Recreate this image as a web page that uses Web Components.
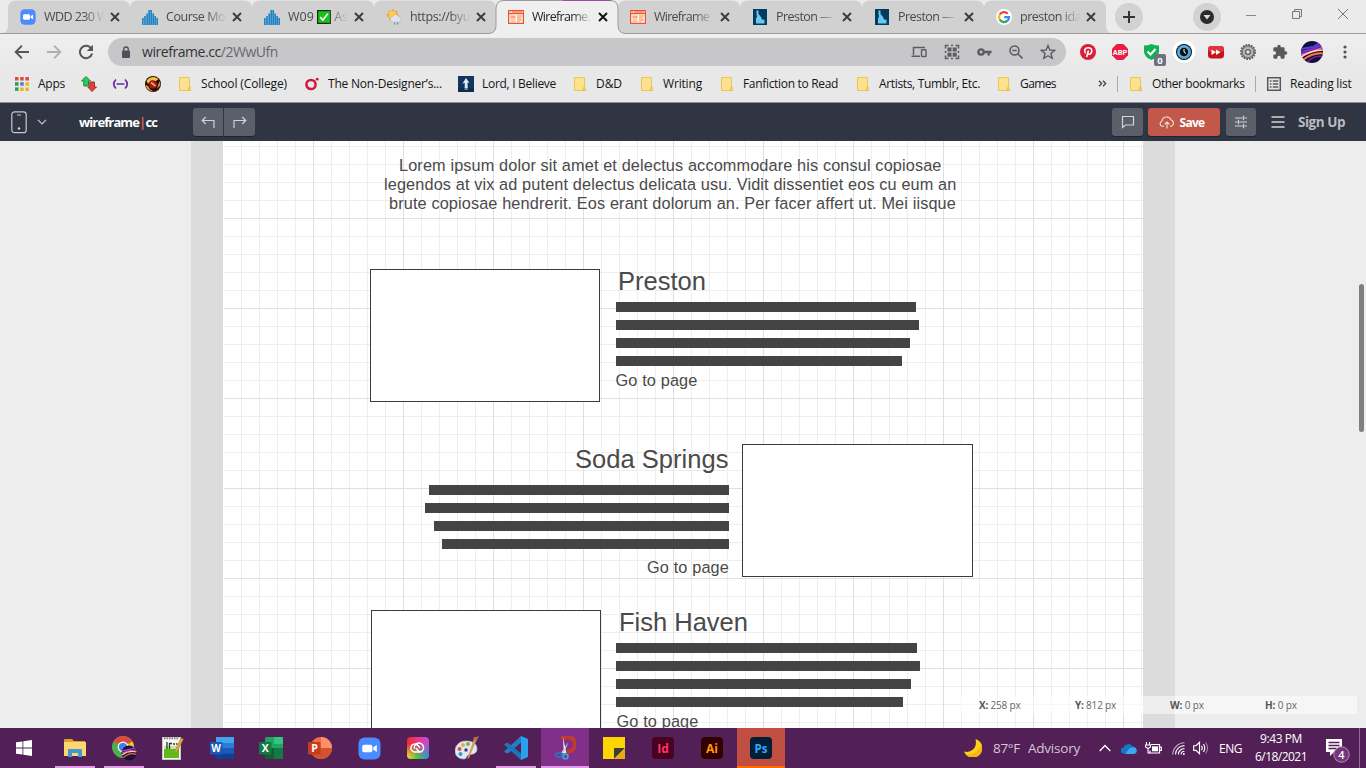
<!DOCTYPE html>
<html lang="en">
<head>
<meta charset="utf-8">
<title>wireframe.cc</title>
<style>
html,body{margin:0;height:100%;overflow:hidden}
body{font-family:"Open Sans","Noto Sans",sans-serif}
</style>
</head>
<body>
<desktop-screen></desktop-screen>
<script>
const PHOTO = `<radialGradient id="pg" cx=".4" cy=".9" r=".9"><stop offset="0" stop-color="#ffb070"/><stop offset=".35" stop-color="#d0508a"/><stop offset=".7" stop-color="#3a2a9a"/><stop offset="1" stop-color="#15104a"/></radialGradient>`;
const ICONS = {
zoom:`<svg viewBox="0 0 24 24"><rect x=".5" y=".5" width="23" height="23" rx="6.5" fill="#4a8cff"/><rect x="4.5" y="8" width="10.5" height="8" rx="2" fill="#fff"/><path d="M16 10.8 19.6 8.4V15.6L16 13.2Z" fill="#fff"/></svg>`,
check:`<svg viewBox="0 0 14 14"><rect x=".6" y=".6" width="12.800" height="12.800" fill="#13c413" stroke="#222" stroke-width="1.200"/><path d="M3.200 7.200 5.800 10 10.800 3.800" fill="none" stroke="#fff" stroke-width="1.700"/></svg>`,
bars:`<svg viewBox="0 0 16 16"><path d="M.8 9v7M3 7v9M5.2 4.5V16M7.2 1v15M9.2 1v15M11.2 4.5V16M13.2 7v9M15.3 9v7" stroke="#1f83c6" stroke-width="1.7"/></svg>`,
weather:`<svg viewBox="0 0 16 16"><path d="M1 5 3 4 2 1.500 5 2 7 0 9 2 11.500 2 11.500 4.500 13 7 8 10 3.500 11.500 3.500 9 1 7.500Z" fill="#f0a02c"/><circle cx="6.500" cy="5.800" r="4" fill="#ffc95a"/><path d="M6 13a2.600 2.600 0 0 1 .5-5 3.300 3.300 0 0 1 6.300 0 2.600 2.600 0 0 1 .5 5Z" fill="#dfe3ea" stroke="#b3b7c4" stroke-width=".6"/><path d="M9 14l-.6 1.500M12 13.500l-.8 2" stroke="#579" stroke-width="1"/></svg>`,
wire:`<svg viewBox="0 0 16 16"><rect x=".6" y="1.600" width="14.800" height="12.800" fill="#fff3ea" stroke="#e8552c" stroke-width="1.200"/><path d="M1 4.600H15" stroke="#e8552c" stroke-width="1.200"/><path d="M2 3h1m1 0h10" stroke="#e8552c" stroke-width="1"/><path d="M2.500 6.500h5v3h-5zM2.500 10.500h5v1h-5zM2.500 12.300h5v.9h-5z" fill="#f3a883"/><path d="M9 6.500h5v1H9zM9 8.500h4v1H9zM9 10.500h5v1H9zM9 12.500h3v.8H9z" fill="#f08a5b"/></svg>`,
idaho:`<svg viewBox="0 0 14 16"><rect width="14" height="16" fill="#063b60"/><path d="M3.500 1.500H5.500V5L8 8 9 10.500 11.500 10.800V14.500H3V9.500L4 7.500 3.500 5Z" fill="#68c8f0"/></svg>`,
google:`<svg viewBox="0 0 16 16"><circle cx="8" cy="8" r="8" fill="#fff"/><g fill="none" stroke-width="2.300"><path d="M11.700 4.700A5 5 0 0 0 3.700 5.500" stroke="#ea4335"/><path d="M3.700 5.500a5 5 0 0 0 0 5" stroke="#fbbc05"/><path d="M3.700 10.500a5 5 0 0 0 7.800 1.200" stroke="#34a853"/><path d="M11.500 11.700A5 5 0 0 0 13 8.200H8.200" stroke="#4285f4"/></g></svg>`,
x:`<svg viewBox="0 0 10 10"><path d="M1 1l8 8m0-8l-8 8" stroke="currentColor" stroke-width="1.900"/></svg>`,
plus:`<svg viewBox="0 0 28 28"><circle cx="14" cy="14" r="14" fill="#d2d2d2"/><path d="M14 8v12M8 14h12" stroke="#333" stroke-width="2"/></svg>`,
drop:`<svg viewBox="0 0 28 28"><circle cx="14" cy="14" r="14" fill="#d2d2d2"/><circle cx="14" cy="14" r="7" fill="#2b2b2b"/><path d="M10.500 12h7L14 16.500Z" fill="#ddd"/></svg>`,
min:`<svg viewBox="0 0 12 12"><path d="M1 6.500h10" stroke="#888"/></svg>`,
restore:`<svg viewBox="0 0 12 12"><path d="M1.500 3.500h7v7h-7zM3.500 3.500v-2h7v7h-2" fill="none" stroke="#777"/></svg>`,
close:`<svg viewBox="0 0 12 12"><path d="M1 1l10 10M11 1 1 11" stroke="#777" stroke-width="1"/></svg>`,
back:`<svg viewBox="0 0 16 16"><path d="M15 8H2M8 1.700 1.700 8 8 14.300" fill="none" stroke="#555659" stroke-width="1.900"/></svg>`,
fwd:`<svg viewBox="0 0 16 16"><path d="M1 8h13M8 1.700 14.300 8 8 14.300" fill="none" stroke="#b0b0b2" stroke-width="1.900"/></svg>`,
reload:`<svg viewBox="0 0 16 16"><path d="M13.400 4.800A6.200 6.200 0 1 0 14.100 9.500" fill="none" stroke="#555659" stroke-width="2"/><path d="M15 .8V7H8.800Z" fill="#555659"/></svg>`,
lock:`<svg viewBox="0 0 10 13"><rect x="1" y="4.500" width="8" height="7.500" rx="1" fill="#505155"/><path d="M2.700 5V3.300a2.300 2.300 0 0 1 4.600 0V5" fill="none" stroke="#505155" stroke-width="1.300"/></svg>`,
device:`<svg viewBox="0 0 16 12"><path d="M14 1.500H2.500v7.500M.5 10.300H9" fill="none" stroke="#5c5d62" stroke-width="1.500"/><rect x="10.500" y="3.700" width="4.500" height="6.800" rx=".6" fill="none" stroke="#5c5d62" stroke-width="1.400"/></svg>`,
qr:`<svg viewBox="0 0 16 16"><g fill="none" stroke="#5c5d62" stroke-width="1.500"><path d="M1.500 4.500v-3h3M11.500 1.500h3v3M14.500 11.500v3h-3M4.500 14.500h-3v-3"/><path d="M7 1.500h2M7 14.500h2M1.500 7v2M14.500 7v2"/></g><g fill="#5c5d62"><rect x="3.500" y="3.500" width="4" height="4"/><rect x="8.700" y="3.500" width="4" height="4"/><rect x="3.500" y="8.700" width="4" height="4"/><rect x="8.700" y="8.700" width="4" height="4"/></g></svg>`,
key:`<svg viewBox="0 0 16 10"><circle cx="4.300" cy="5" r="2.800" fill="none" stroke="#5c5d62" stroke-width="2.600"/><path d="M7 5h8.500M12.500 5v3.700" stroke="#5c5d62" stroke-width="2.600"/></svg>`,
mag:`<svg viewBox="0 0 14 14"><circle cx="5.500" cy="5.500" r="4.500" fill="none" stroke="#5c5d62" stroke-width="1.500"/><path d="M3.300 5.500h4.400M8.700 8.700l4.800 4.800" stroke="#5c5d62" stroke-width="1.600"/></svg>`,
star:`<svg viewBox="0 0 16 16"><path d="M8 1.500 9.900 6l4.800.4L11 9.500l1.200 4.800L8 11.700l-4.200 2.600L5 9.500 1.300 6.400 6.100 6Z" fill="none" stroke="#5c5d62" stroke-width="1.400"/></svg>`,
pin:`<svg viewBox="0 0 16 16"><circle cx="8" cy="8" r="8" fill="#d81e3a"/><path d="M5.600 9.200C3.500 6.500 5 3.700 8.200 3.700c2.600 0 3.800 1.600 3.600 3.500-.2 2.400-2.300 3.800-3.900 2.600M8.500 6.500 6.600 13" fill="none" stroke="#fff" stroke-width="1.600"/></svg>`,
abp:`<svg viewBox="0 0 16 16"><path d="M4.700 0h6.600L16 4.700v6.600L11.300 16H4.700L0 11.300V4.700Z" fill="#e91e46"/><text x="8" y="11" font-family="Roboto,sans-serif" font-weight="700" font-size="8" textLength="14.500" lengthAdjust="spacingAndGlyphs" text-anchor="middle" fill="#fff">ABP</text></svg>`,
shield:`<svg viewBox="0 0 22 22"><path d="M0 1.500Q4 1.500 7.500 0 11 1.500 15 1.500V8Q14.500 13 7.500 16 .5 13 0 8Z" fill="#10b251"/><path d="M3.500 7.500 6.500 10.500 11.500 5" fill="none" stroke="#fff" stroke-width="2"/><rect x="10" y="10" width="12" height="12" rx="2" fill="#6f7080"/><text x="16" y="19.500" font-family="Open Sans,sans-serif" font-weight="700" font-size="9.500" text-anchor="middle" fill="#fff">0</text></svg>`,
clock:`<svg viewBox="0 0 24 24"><circle cx="12" cy="12.700" r="11.300" fill="#c4c4c4"/><circle cx="12" cy="12" r="11.500" fill="#fff"/><circle cx="12" cy="12" r="8" fill="#111"/><circle cx="12" cy="12" r="5.600" fill="none" stroke="#4eaee0" stroke-width="2.800"/><path d="M12 9V12l2 1.500" stroke="#fff" fill="none"/></svg>`,
ff:`<svg viewBox="0 0 16 14"><rect y="1" width="16" height="12.500" rx="3.500" fill="#c4131e"/><rect y="1" width="16" height="6" rx="3" fill="#e2333b"/><path d="M3.500 4.500 8 7.300 3.500 10ZM8 4.500 12.500 7.300 8 10Z" fill="#fff"/></svg>`,
gear:`<svg viewBox="0 0 16 16"><circle cx="8" cy="8" r="7" fill="#999" stroke="#5e5e5e" stroke-width="2" stroke-dasharray="1.700 1.050"/><circle cx="8" cy="8" r="5.700" fill="#b6b6b6" stroke="#777"/><circle cx="8" cy="8" r="2.400" fill="#e8e8e8" stroke="#5e5e5e" stroke-width="1.400"/></svg>`,
puzzle:`<svg viewBox="0 0 24 24"><path d="M20.500 11H19V7a2 2 0 0 0-2-2h-4V3.500a2.500 2.500 0 0 0-5 0V5H4a2 2 0 0 0-2 2v3.800h1.500a2.700 2.700 0 0 1 0 5.400H2V20a2 2 0 0 0 2 2h3.800v-1.500a2.700 2.700 0 0 1 5.400 0V22H17a2 2 0 0 0 2-2v-4h1.500a2.500 2.500 0 0 0 0-5Z" fill="#57585c"/></svg>`,
photo:`<svg viewBox="0 0 22 22"><defs><clipPath id="c"><circle cx="11" cy="11" r="11"/></clipPath></defs><g clip-path="url(#c)"><rect width="22" height="22" fill="#170d3c"/><path d="M0 8 12 6 22 0" stroke="#3a4fd8" stroke-width="2" fill="none"/><path d="M0 11 12 8 23 3" stroke="#8a2fc8" stroke-width="2" fill="none"/><path d="M-1 14 12 10 23 6" stroke="#ea5cc8" stroke-width="1.800" fill="none"/><path d="M0 16Q12 8.500 23 9" stroke="#ffe0bc" stroke-width="1.600" fill="none"/><path d="M2 19Q12 11 23 12.500" stroke="#ff7a30" stroke-width="2" fill="none"/><path d="M5 22Q14 13 23 16" stroke="#7a2190" stroke-width="1.700" fill="none"/></g></svg>`,
dots:`<svg viewBox="0 0 4 14"><g fill="#505155"><circle cx="2" cy="2" r="1.600"/><circle cx="2" cy="7" r="1.600"/><circle cx="2" cy="12" r="1.600"/></g></svg>`,
apps:`<svg viewBox="0 0 16 16"><g transform="translate(1 1)"><path d="M0 0h3.500v3.500H0zM5.200 0h3.500v3.500H5.200zM10.400 0h3.500v3.500h-3.500z" fill="#dd4a3c"/><path d="M0 5.200h3.500v3.500H0z" fill="#2f9c54"/><path d="M5.200 5.200h3.500v3.500H5.200z" fill="#3f80e6"/><path d="M10.400 5.200h3.500v3.500h-3.500zM10.400 10.400h3.500v3.500h-3.500zM5.200 10.400h3.500v3.500H5.200z" fill="#efb320"/><path d="M0 10.400h3.500v3.500H0z" fill="#2f9c54"/></g></svg>`,
updown:`<svg viewBox="0 0 16 16"><path d="M5 .5 9.500 5H7.500V10H2.800V5H.5Z" fill="#31c95b" stroke="#178a38"/><path d="M11 15.500 6.800 11H8.800V6h4.600v5h2.100Z" fill="#e5403a" stroke="#a82a28"/></svg>`,
paren:`<svg viewBox="0 0 17 12"><path d="M4 1.500Q-.5 6 4 10.500M13 1.500Q17.500 6 13 10.500M4.500 6h8" fill="none" stroke="#6a2aa2" stroke-width="1.700"/></svg>`,
ball:`<svg viewBox="0 0 16 16"><circle cx="8" cy="8" r="8" fill="#2b0a06"/><path d="M1.500 4.500Q7-1.500 13.500 3L11 5 6 4.500 3 8Z" fill="#f2c23c"/><path d="M.5 9 3 10 5 13.500 9 15.500Q2 15.500 .5 9Z" fill="#e8a42b"/><path d="M12 13 15.500 9 14.500 5 13 9Z" fill="#d8922b"/><circle cx="8" cy="8.500" r="3.900" fill="#a51a16"/><path d="M6 6.500l4.500 3.500" stroke="#f0a08c" stroke-width="1.600"/></svg>`,
folder:`<svg viewBox="0 0 16 16"><path d="M2.500 1.500H12.500V10.500L13.500 12V14.500H2.500Z" fill="#fde28e" stroke="#e9c656"/><path d="M12.500 10l-1.300 3v1.500h2.300" fill="#f6d269" stroke="#e5bb3d" stroke-width=".8"/></svg>`,
ring:`<svg viewBox="0 0 16 16"><circle cx="7" cy="8.500" r="4.600" fill="none" stroke="#d5173d" stroke-width="2.500"/><circle cx="13.200" cy="3.200" r="1.400" fill="#d5173d"/></svg>`,
lord:`<svg viewBox="0 0 16 16"><rect width="16" height="16" fill="#12365c"/><path d="M8 2 11.500 7 9.500 6.500 9.800 14H6.600L6.800 7 4.500 7.500Z" fill="#dfe9f1"/><path d="M0 12h16v4H0z" fill="#0b2442" opacity=".5"/></svg>`,
list:`<svg viewBox="0 0 16 16"><path d="M1.700 1.700h12.600v12.600H1.700z" fill="none" stroke="#57585c" stroke-width="1.500"/><path d="M3.800 5H5.500M3.800 8H5.500M3.800 11H5.500M6.800 5h5.500M6.800 8h5.500M6.800 11h5.500" stroke="#57585c" stroke-width="1.400"/></svg>`,
more:`<svg viewBox="0 0 9 7"><path d="M1 .7 3.700 3.500 1 6.300M5 .7 7.700 3.500 5 6.300" fill="none" stroke="#444" stroke-width="1.300"/></svg>`,
phone:`<svg viewBox="0 0 16 23"><rect x=".8" y=".8" width="14.400" height="20.900" rx="2.800" fill="none" stroke="#c5c8cc" stroke-width="1.200"/><path d="M6 4h4" stroke="#c5c8cc"/><circle cx="8" cy="17.500" r="1.200" fill="#d8dadd"/></svg>`,
chev:`<svg viewBox="0 0 10 6"><path d="M1 .8 5 4.800 9 .8" fill="none" stroke="#c5c8cc" stroke-width="1.200"/></svg>`,
undo:`<svg viewBox="0 0 14 13"><path d="M13 12V4.500H1.200M4.800 1 1.200 4.500 4.800 8" fill="none" stroke="#d3d5d8" stroke-width="1.150"/></svg>`,
redo:`<svg viewBox="0 0 14 13"><path d="M1 12V4.500H12.800M9.200 1 12.800 4.500 9.200 8" fill="none" stroke="#d3d5d8" stroke-width="1.150"/></svg>`,
chat:`<svg viewBox="0 0 14 14"><path d="M1.500 1.500h11v8.500H4.500L1.500 12.500Z" fill="none" stroke="#d3d5d8" stroke-width="1.200"/></svg>`,
cloud:`<svg viewBox="0 0 16 13"><path d="M5 10.300H3.300A2.800 2.800 0 0 1 3 4.900 4.700 4.700 0 0 1 11.900 3.700 3.500 3.500 0 0 1 12.300 10.300H11M8 12.500V6.200M5.600 8.400 8 6l2.400 2.400" fill="none" stroke="#fbe4df" stroke-width="1.100"/></svg>`,
tune:`<svg viewBox="0 0 14 14"><path d="M1 3h7.500M10.500 3H13M1 7h2.500M5.500 7H13M1 11h7.500M10.500 11H13M9.500 .8v4.400M4.500 4.800v4.400M9.500 8.800v4.400" stroke="#d3d5d8" stroke-width="1.200"/></svg>`,
menu:`<svg viewBox="0 0 14 12"><path d="M.5 1h13M.5 6h13M.5 11h13" stroke="#d3d5d8" stroke-width="1.400"/></svg>`,
win:`<svg viewBox="0 0 16 16"><path d="M0 2.300 6.500 1.400V7.600H0ZM7.300 1.300 16 0V7.600H7.300ZM0 8.400H6.500V14.600L0 13.700ZM7.300 8.400H16V16L7.300 14.700Z" fill="#fff"/></svg>`,
files:`<svg viewBox="0 0 22 18"><path d="M0 1Q0 0 1 0H8L10 2H21V16H0Z" fill="#dba233"/><path d="M0 3H22V17H0Z" fill="#fcd670"/><path d="M4 18V11Q4 10 5 10H17Q18 10 18 11V18H14V14H8V18Z" fill="#3f9ad4"/></svg>`,
chrome:`<svg viewBox="0 0 26 26"><defs>${PHOTO}</defs><circle cx="12" cy="12" r="11" fill="#4caf50"/><path d="M12 12 2.500 6.500A11 11 0 0 1 21.500 6.500Z" fill="#dd4b3e"/><path d="M12 12 21.500 6.500A11 11 0 0 1 12 23Z" fill="#f6c52e"/><circle cx="12" cy="12" r="5.400" fill="#fff"/><circle cx="12" cy="12" r="4.200" fill="#3f7fe8"/><circle cx="18" cy="18" r="7.500" fill="#1b1040"/><path d="M11 16 24 13M11 18Q18 15 25 15" stroke="#c04fd8" stroke-width="1.200" fill="none"/><path d="M11 20Q18 15 25.500 17" stroke="#ffc8a0" stroke-width="1.200" fill="none"/><path d="M12.500 22.500Q19 17 25 19.500" stroke="#f06830" stroke-width="1.300" fill="none"/></svg>`,
npp:`<svg viewBox="0 0 22 24"><rect x=".5" y="1.500" width="18" height="22" fill="#f5f8ee" stroke="#c8c8c8"/><path d="M2 13H17V22H2Z" fill="#5fbb1c"/><path d="M2 10h15v3H2z" fill="#c4e6a0"/><path d="M2 2.500h15" stroke="#777" stroke-width="1.500" stroke-dasharray="1.500 1"/><path d="M5 6v7M7.500 13V7.500h2.500M11 8h2M14 8h1.500" stroke="#333" fill="none" stroke-width="1.300"/><path d="M21.500 3 15 16 12.500 17.500 13 14.500 19 2Z" fill="#e0a93c" stroke="#936a1b" stroke-width=".5"/></svg>`,
word:`<svg viewBox="0 0 24 22"><rect x="6" width="18" height="22" rx="1.500" fill="#2b7cd3"/><path d="M6 0H24V6H6Z" fill="#41a5ee"/><path d="M6 11H24V16.500H6Z" fill="#185abd"/><path d="M6 16.500H24V22H6Z" fill="#103f91"/><rect y="5" width="12.500" height="12.500" rx="1" fill="#185abd"/><text x="6.200" y="15" font-family="Open Sans,sans-serif" font-weight="700" font-size="10" text-anchor="middle" fill="#fff">W</text></svg>`,
excel:`<svg viewBox="0 0 24 22"><rect x="6" width="18" height="22" rx="1.500" fill="#21a366"/><path d="M15 0h9v7h-9z" fill="#33c481"/><path d="M6 11h9v11H6z" fill="#185c37"/><path d="M15 11h9v11h-9z" fill="#107c41"/><rect y="5" width="12.500" height="12.500" rx="1" fill="#107c41"/><text x="6.200" y="15" font-family="Open Sans,sans-serif" font-weight="700" font-size="10.500" text-anchor="middle" fill="#fff">X</text></svg>`,
ppt:`<svg viewBox="0 0 24 22"><circle cx="13" cy="11" r="11" fill="#ed6c47"/><path d="M13 0A11 11 0 0 1 24 11H13Z" fill="#ff8f6b"/><path d="M2 11H24A11 11 0 0 1 2 11" fill="#d35230"/><rect y="5" width="12.500" height="12.500" rx="1" fill="#c43e1c"/><text x="6.500" y="15" font-family="Open Sans,sans-serif" font-weight="700" font-size="10.500" text-anchor="middle" fill="#fff">P</text></svg>`,
cc:`<svg viewBox="0 0 22 22"><defs><linearGradient id="g" x1="0" y1="0" x2="1" y2="0"><stop offset="0" stop-color="#ee2a24"/><stop offset=".5" stop-color="#ef3a8c"/><stop offset="1" stop-color="#b84cdb"/></linearGradient><linearGradient id="h" x1="0" y1="0" x2="1" y2="0"><stop offset="0" stop-color="#f6e02a"/><stop offset=".45" stop-color="#4fc840"/><stop offset="1" stop-color="#2a8cf0"/></linearGradient><linearGradient id="m" x1="0" y1="0" x2="0" y2="1"><stop offset=".3" stop-color="#000"/><stop offset=".9" stop-color="#fff"/></linearGradient><mask id="k"><rect width="22" height="22" fill="url(#m)"/></mask></defs><rect width="22" height="22" rx="4" fill="url(#g)"/><rect width="22" height="22" rx="4" fill="url(#h)" mask="url(#k)"/><g fill="none" stroke="#fff" stroke-width="1.500"><path d="M13.500 15H8A4 4 0 1 1 10.500 8L13 10.800M7.500 11.800a4.600 4.600 0 1 1 6 3.200Q12.500 15 11.500 14L9 11.300"/></g></svg>`,
paint:`<svg viewBox="0 0 24 24"><path d="M11 5C4 5 0 10 0 15s4 8 9 8c3 0 2-3 4-4s9 0 9-6-5-8-11-8Z" fill="#dfe8f0" stroke="#a8bccb" stroke-width=".7"/><circle cx="4.500" cy="13" r="2" fill="#df4f43"/><circle cx="8" cy="9" r="2" fill="#e5ae3c"/><circle cx="13" cy="8" r="2" fill="#77b843"/><circle cx="5.500" cy="18" r="2" fill="#3597d3"/><circle cx="11" cy="14" r="1.700" fill="#2c3d75"/><path d="M22 3 14 22 12.500 23 13 20 19 3Z" fill="#d99a56"/><path d="M18.500 4Q18 1 20 1T24 0L21.500 5Z" fill="#a9744b"/></svg>`,
code:`<svg viewBox="0 0 24 24"><path d="M17 0V6.500L4 17.500 2 17 0 15.500 17 0Z" fill="#1f80c4"/><path d="M0 8.500 2 7 4 6.800 17 17.500V24L0 8.500Z" fill="#1b75b8"/><path d="M17 0 24 3V21L17 24Z" fill="#2ba0ee"/></svg>`,
snip:`<svg viewBox="0 0 22 24"><path d="M7.500 3A8 7.500 0 1 1 13 15.800" fill="none" stroke="#c23a2c" stroke-width="4"/><path d="M9 1 12.300 17 9.800 17Z" fill="#f3f5f8"/><path d="M14.500 6 7 17 9.500 18Z" fill="#c8d2de"/><ellipse cx="5" cy="19" rx="3.400" ry="2" fill="none" stroke="#2f6fb8" stroke-width="1.800"/><circle cx="11.500" cy="20.500" r="2.400" fill="none" stroke="#3f9fe0" stroke-width="1.800"/></svg>`,
sticky:`<svg viewBox="0 0 22 22"><path d="M0 0H22V22H0Z" fill="#fbd600"/><path d="M11 22V11H22Z" fill="#3c3c3c"/><path d="M11 22 22 11V22Z" fill="#e8ac12"/></svg>`,
id:`<svg viewBox="0 0 22 22"><rect width="22" height="22" rx="4" fill="#49021f"/><text x="11" y="15.500" font-family="Open Sans,sans-serif" font-weight="700" font-size="12" text-anchor="middle" fill="#ff3366">Id</text></svg>`,
ai:`<svg viewBox="0 0 22 22"><rect width="22" height="22" rx="4" fill="#330000"/><text x="11" y="15.500" font-family="Open Sans,sans-serif" font-weight="700" font-size="12" text-anchor="middle" fill="#ff9a00">Ai</text></svg>`,
ps:`<svg viewBox="0 0 22 22"><rect width="22" height="22" rx="4" fill="#001e36"/><text x="11" y="15.500" font-family="Open Sans,sans-serif" font-weight="700" font-size="11.500" text-anchor="middle" fill="#31a8ff">Ps</text></svg>`,
moon:`<svg viewBox="0 0 18 18"><path d="M11.500 0A9.500 9.500 0 1 1 0 12.500Q5 14 9 10.500T11.500 0Z" fill="#fcd116"/><path d="M18 8A9 9 0 0 1 2 15Q8 17 13 12T17 4Z" fill="#f4aa18" opacity=".7"/></svg>`,
up:`<svg viewBox="0 0 12 8"><path d="M.7 7 6 1.500 11.300 7" fill="none" stroke="#fff" stroke-width="1.300"/></svg>`,
drive:`<svg viewBox="0 0 16 11"><path d="M3 10.500A3 3 0 0 1 2.500 4.500 5 5 0 0 1 11.500 3.500 3.600 3.600 0 0 1 13 10.500Z" fill="#1678c8"/><path d="M4 11 8 6Q10 3.500 13 4.500A3.300 3.300 0 0 1 13 11Z" fill="#3ba9ee"/></svg>`,
batt:`<svg viewBox="0 0 17 12"><path d="M6 2.500H14.500V11H5V8.500M15 5h1.300v3.500H15" fill="none" stroke="#fff" stroke-width="1.200"/><path d="M7 4.300h6v5H7z" fill="#fff"/><path d="M1.500 0v3M4.500 0v3M.5 3h5v2L3 6.500.5 5ZM3 6v5h2" fill="none" stroke="#fff" stroke-width="1.100"/></svg>`,
wifi:`<svg viewBox="0 0 13 13"><g fill="none" stroke="#fff" stroke-width="1.100"><path d="M.7 12.500A12 12 0 0 1 12.500 .8" opacity=".65"/><path d="M3.500 12.500A9 9 0 0 1 12.500 3.600M6.300 12.500a6.200 6.200 0 0 1 6.200-6"/><path d="M9 12.500a3.500 3.500 0 0 1 3.500-3.300"/></g><circle cx="11.800" cy="12" r="1" fill="#fff"/></svg>`,
vol:`<svg viewBox="0 0 16 14"><path d="M.7 4.700H3L6.500 1.300V12.700L3 9.300H.7ZM8.500 4.700Q10 7 8.500 9.300M10.500 3Q13 7 10.500 11" fill="none" stroke="#fff" stroke-width="1.150"/><path d="M12.700 1.500Q16.500 7 12.700 12.500" fill="none" stroke="#fff" opacity=".5"/></svg>`,
note:`<svg viewBox="0 0 26 25"><path d="M0 0H16V13H8L4 17V13H0Z" fill="#fff"/><path d="M2.500 3.500h11M2.500 6.500h11M2.500 9.500h8" stroke="#521f56" stroke-width="1.300"/><circle cx="15.500" cy="15.500" r="7.700" fill="#75357b" stroke="#b68fb9"/><text x="15.500" y="19.500" font-family="Open Sans,sans-serif" font-weight="600" font-size="11" text-anchor="middle" fill="#fff">4</text></svg>`
};

class Base extends HTMLElement{
  constructor(){super();this.attachShadow({mode:'open'})}
  connectedCallback(){this.shadowRoot.innerHTML=this.render()}
}
const def=(n,c)=>customElements.define(n,c);

/* Inline icon: name, width and height */
def('ui-icon',class extends Base{render(){
  return `<style>:host{display:block;flex:none;width:${this.getAttribute('w')||16}px;height:${this.getAttribute('h')||this.getAttribute('w')||16}px}svg{display:block;width:100%;height:100%}</style>${ICONS[this.getAttribute('name')]}`}});

/* One line of text whose tracking is set to reach the width given in "w" */
def('ui-label',class extends HTMLElement{
  constructor(){super();this.attachShadow({mode:'open'}).innerHTML=`<style>:host{display:block;flex:none;white-space:pre}span{display:inline-block}</style><span><slot></slot></span>`}
  connectedCallback(){
    const w=+this.getAttribute('w'); if(!w) return;
    const n=this.textContent.length, nat=this.shadowRoot.querySelector('span').getBoundingClientRect().width;
    this.style.letterSpacing=((w-nat)/n).toFixed(3)+'px';
  }});

/* A left-to-right strip: each item spans from its start to the next one's */
const spans=(items,end)=>items.map((it,i)=>({...it,w:(i+1<items.length?items[i+1].x:end)-it.x}));

def('browser-tab',class extends Base{render(){
  const on=this.hasAttribute('active'),sep=this.hasAttribute('sep');
  const text=this.getAttribute('label').replace('✅','<span class="e">✅<ui-icon name="check" w="14"></ui-icon></span>');
  return `<style>
  :host{display:flex;width:122px;height:34px;position:relative;align-items:center;box-sizing:border-box;padding-left:12px;flex:none;font-size:12.500px;color:${on?'#222':'#494949'};z-index:${on?2:0}}
  .s{position:absolute;left:-8px;top:0;width:138px;height:34px;z-index:-1}
  .t{margin-left:8px;width:66px;overflow:hidden;height:20px;line-height:20px;-webkit-mask:linear-gradient(90deg,#000 60%,transparent 92%);mask:linear-gradient(90deg,#000 60%,transparent 92%)}
  .x{margin-left:0;color:${on?'#111':'#3c3c3c'}}
  .e{display:inline-block;width:14px;position:relative;color:transparent;letter-spacing:0;font-size:10px}.e ui-icon{position:absolute;left:0;top:3px}
  .v{position:absolute;right:-1px;top:7px;width:1px;height:20px;background:#777}
  </style><svg class="s" viewBox="0 0 138 34"><path d="M0 33.500Q8 33.500 8 25.500V8.500Q8 .5 16 .5H122Q130 .5 130 8.500V25.500Q130 33.500 138 33.500V34H0Z" fill="${on?'#efefef':'#d1d1d1'}"/>
  ${on?'<path d="M0 33.500Q8 33.500 8 25.500V8.500Q8 .5 16 .5H122Q130 .5 130 8.500V25.500Q130 33.500 138 33.500" fill="none" stroke="#999"/>':'<path d="M0 33.500H138" stroke="#9a9a9a"/>'}</svg>
  <ui-icon name="${this.getAttribute('icon')}"></ui-icon><div class="t"><ui-label w="${this.getAttribute('w')}">${text}</ui-label></div><ui-icon class="x" name="x" w="10"></ui-icon>${sep?'<i class="v"></i>':''}`}});

def('tab-strip',class extends Base{render(){
  const T=[['zoom','WDD 230 W',64,1],['bars','Course Mo',59,1],['bars','W09 ✅ As',60,1],['weather','https://byu',60,0],['wire','Wireframe.',58,0],['wire','Wireframe',55,0],['idaho','Preston —',56,1],['idaho','Preston —',56,1],['google','preston ida',61,0]];
  return `<style>:host{display:flex;height:34px;background:#ebebeb;padding-left:8px;box-shadow:inset 0 -1px #9a9a9a;position:relative;align-items:flex-start;isolation:isolate}
  .p{margin:3px 0 0 9px}.d{margin:3px 0 0 50px}.c1{margin:9px 0 0 24px}.c2{margin:8px 0 0 34px}.c3{margin:8px 0 0 34px}
  .line{position:absolute;left:563px;top:0;width:48px;height:1px;background:#a04ba8;z-index:3}
  </style>${T.map((t,i)=>`<browser-tab icon="${t[0]}" label="${t[1]}" w="${t[2]}" ${i==4?'active':''} ${t[3]?'sep':''}></browser-tab>`).join('')}
  <ui-icon class="p" name="plus" w="28"></ui-icon><ui-icon class="d" name="drop" w="28"></ui-icon><ui-icon class="c1" name="min" w="12"></ui-icon><ui-icon class="c2" name="restore" w="12"></ui-icon><ui-icon class="c3" name="close" w="12"></ui-icon><div class="line"></div>`}});

def('tool-bar',class extends Base{render(){
  const om=[['device',911,16,12],['qr',944,16,16],['key',977,15,10],['mag',1009,14,14],['star',1040,16,16]];
  const ex=[['pin',1080,16,16],['abp',1112,16,16],['shield',1144,22,22],['clock',1172,24,24],['ff',1208,16,14],['gear',1240,16,16],['puzzle',1272,16,16],['photo',1301,22,22],['dots',1343,4,14]];
  const row=(a,s)=>{let p=s;return a.map(([n,x,w,h])=>{const m=x-p;p=x+w;return `<ui-icon name="${n}" w="${w}" h="${h}" style="margin-left:${m}px${n=='shield'?';margin-top:6px':''}"></ui-icon>`}).join('')};
  return `<style>:host{display:flex;height:36px;background:linear-gradient(#efefef,#e8e8e8);align-items:center}
  .o{margin-left:14px;width:958px;height:28px;border-radius:14px;background:#c7c7c9;display:flex;align-items:center;font-size:14px;color:#333;box-sizing:border-box}
  .o ui-label{width:137px;line-height:26px}em{font-style:normal;color:#66676b}
  </style>${row([['back',14,16,16],['fwd',46,16,16],['reload',78,16,16]],0)}
  <div class="o"><ui-icon name="lock" w="10" h="13" style="margin-left:13px"></ui-icon><ui-label w="136" style="margin-left:11px">wireframe.cc<em>/2WwUfn</em></ui-label>${row(om,279)}</div>${row(ex,1066)}`}});

def('bookmark-bar',class extends Base{render(){
  const B=spans([{x:14,i:'apps',t:'Apps',l:27},{x:81,i:'updown'},{x:112,i:'paren',iw:17,ih:12},{x:145,i:'ball'},{x:177,i:'folder',t:'School (College)',l:86},{x:304,i:'ring',t:'The Non-Designer’s...',l:114},{x:458,i:'lord',t:'Lord, I Believe',l:74},{x:572,i:'folder',t:'D&amp;D',l:26},{x:639,i:'folder',t:'Writing',l:39},{x:719,i:'folder',t:'Fanfiction to Read',l:95},{x:855,i:'folder',t:'Artists, Tumblr, Etc.',l:101},{x:996,i:'folder',t:'Games',l:36},{x:1098,i:'more',iw:9,ih:7},{x:1117,s:1},{x:1128,i:'folder',t:'Other bookmarks',l:92.500},{x:1255,s:1},{x:1266,i:'list',t:'Reading list',l:61.500}],1366);
  return `<style>:host{display:flex;height:32px;padding-left:14px;background:#e8e8e8;align-items:center;border-bottom:1px solid #8f9094;font-size:12px;color:#151515}
  div{display:flex;align-items:center;gap:8px;flex:none;height:27px;margin-bottom:5px}i{width:1px;height:16px;background:#aaa}ui-label{line-height:18px}</style>
  ${B.map(b=>`<div style="width:${b.w}px">${b.s?'<i></i>':''}${b.i?`<ui-icon name="${b.i}" w="${b.iw||16}" h="${b.ih||16}"></ui-icon>`:''}${b.t?`<ui-label w="${b.l}">${b.t}</ui-label>`:''}</div>`).join('')}`}});

def('app-header',class extends Base{render(){
  return `<style>:host{display:flex;height:38px;background:#2f3542;align-items:center;color:#fff}
  .b{height:28px;background:#5b5f69;display:flex;align-items:center;justify-content:center;box-shadow:0 1px #20242d}
  .logo{font-weight:700;font-size:13px;width:78px;line-height:18px}.logo b{color:#d0604f;font-weight:700}
  .l{width:30px;margin-left:36px;border-radius:3px 0 0 3px}.r{width:31px;margin-left:1px;border-radius:0 3px 3px 0}
  .c{width:31px;margin-left:857px;border-radius:3px}.save{width:72px;margin-left:5px;background:#c25849;border-radius:3px;gap:5px;font-weight:700;font-size:12px;box-sizing:border-box;padding-right:5px}
  .t{width:30px;margin-left:6px;border-radius:3px}.su{font-weight:700;font-size:13.500px;color:#b9bcc1;margin-left:13px}</style>
  <ui-icon name="phone" w="16" h="23" style="margin-left:11px"></ui-icon><ui-icon name="chev" w="10" h="6" style="margin-left:10px"></ui-icon>
  <ui-label class="logo" w="78" style="margin-left:32px">wireframe<b>|</b>cc</ui-label>
  <div class="b l"><ui-icon name="undo" w="14" h="13"></ui-icon></div><div class="b r"><ui-icon name="redo" w="14" h="13"></ui-icon></div>
  <div class="b c"><ui-icon name="chat" w="14"></ui-icon></div><div class="b save"><ui-icon name="cloud" w="16" h="13"></ui-icon><ui-label w="25">Save</ui-label></div><div class="b t"><ui-icon name="tune" w="14"></ui-icon></div>
  <ui-icon name="menu" w="14" h="12" style="margin-left:15px"></ui-icon><ui-label class="su" w="47">Sign Up</ui-label>`}});

/* Free canvas: picture frames, headings, text bars and links on a grid */
def('wire-canvas',class extends Base{render(){
  const box=(x,y,w,h)=>`<div class="box" style="left:${x}px;top:${y}px;width:${w}px;height:${h}px"></div>`;
  const bars=(a,y)=>a.map(([l,r],i)=>`<div class="bar" style="left:${l}px;top:${y+18*i}px;width:${r-l}px"></div>`).join('');
  const t=(x,y,w,s,c='')=>`<ui-label class="${c}" w="${w}" style="left:${x}px;top:${y-1}px">${s}</ui-label>`;
  return `<style>:host{display:block;position:relative;width:920px;height:587px;overflow:hidden;font-family:"Liberation Sans",Arial,sans-serif;color:#4a4a4a;font-size:16.300px;line-height:19px}
  .g{position:absolute;inset:0;background-image:linear-gradient(90deg,#fff 1px,transparent 1px),linear-gradient(90deg,#dfdfdf 1px,transparent 1px),linear-gradient(#dfdfdf 1px,transparent 1px),linear-gradient(90deg,#eee 1px,transparent 1px),linear-gradient(#eee 1px,transparent 1px);background-size:920px 100%,90px 90px,90px 90px,18px 18px,18px 18px;background-position:0 0,0 0,0 77px,0 0,0 5px;background-color:#fff}
  .in{position:absolute;left:-223px;top:-141px;width:1366px;height:768px}
  .in>*{position:absolute;box-sizing:border-box}.box{background:#fff;border:1px solid #3c3c3c}.bar{height:10px;background:#444}.h{font-size:25.500px;line-height:30px}</style>
  <div class="g"></div><div class="in">
  ${t(399,157,542.5,'Lorem ipsum dolor sit amet et delectus accommodare his consul copiosae')}${t(384,176,572.5,'legendos at vix ad putent delectus delicata usu. Vidit dissentiet eos cu eum an')}${t(389,195,567,'brute copiosae hendrerit. Eos erant dolorum an. Per facer affert ut. Mei iisque')}
  ${box(370,269,230,133)}${t(618,267,88,'Preston','h')}${bars([[616,916],[616,919],[616,910],[616,902]],302)}${t(615.5,372,82,'Go to page')}
  ${box(742,444,231,133)}${t(575,445,153.5,'Soda Springs','h')}${bars([[429,729],[425,729],[434,729],[442,729]],485)}${t(647,559,82,'Go to page')}
  ${box(371,610,230,133)}${t(619,608,129,'Fish Haven','h')}${bars([[616,917],[616,920],[616,911],[616,903]],643)}${t(616.5,713,82,'Go to page')}
  </div>`}});

def('work-area',class extends Base{render(){
  return `<style>:host{display:flex;justify-content:flex-start;height:587px;background:#ededed;position:relative;padding-left:191px;box-sizing:border-box}
  .f{display:flex;padding:0 32px;background:#dcdcdc}
  .s{position:absolute;left:1359px;top:143px;width:5px;height:148px;border-radius:3px;background:#7e7f83}
  .st{position:absolute;left:961px;top:555px;width:396px;height:18px;background:rgba(255,255,255,.5);display:grid;grid-template-columns:96px 95px 95px 1fr;padding-left:18px;box-sizing:border-box;font-size:10px;line-height:19px;color:#666}b{color:#555}</style>
  <div class="f"><wire-canvas></wire-canvas></div><div class="s"></div>
  <div class="st"><ui-label w="41.500"><b>X:</b> 258 px</ui-label><ui-label w="41"><b>Y:</b> 812 px</ui-label><ui-label w="34"><b>W:</b> 0 px</ui-label><ui-label w="32"><b>H:</b> 0 px</ui-label></div>`}});

def('task-bar',class extends Base{render(){
  const A=[['win',16,16],['files',22,18,'u'],['chrome',26,26,'u'],['npp',22,24],['word',24,22],['excel',24,22],['ppt',24,22],['zoom',23,23],['cc',22,22],['paint',24,24],['code',24,24,'u'],['snip',22,24,'on'],['sticky',22,22],['id',22,22],['ai',22,22],['ps',22,22,'ps']];
  return `<style>:host{display:flex;height:40px;background:#521f56;color:#fff;align-items:center;position:relative}
  .a{display:grid;grid-template-columns:47px repeat(15,48px);gap:1px;margin-left:1px;padding-left:1px;height:40px}.a div{display:flex;align-items:center;justify-content:center;height:40px;box-sizing:border-box}
  .a div:first-child{padding-right:3px}.a div:nth-child(n+2){margin-left:1px;margin-right:-1px}
  .u{background:linear-gradient(#e29be8,#e29be8) 50% 100%/40px 2px no-repeat}.on{background:#81308a;border-bottom:2px solid #e29be8;padding-top:2px}.ps{background:#c04f42;border-bottom:2px solid #ff6d00;padding-top:2px}
  .w{font-size:13.500px;color:#d5c7d6;line-height:20px}.ck{width:56px;display:flex;flex-direction:column;align-items:center;font-size:12px;line-height:18px;margin-left:11px}
  .e{width:1px;height:40px;background:#8f6d92;margin-left:7px}</style>
  <div class="a">${A.map(a=>`<div class="${a[3]||''}"><ui-icon name="${a[0]}" w="${a[1]}" h="${a[2]}"></ui-icon></div>`).join('')}</div>
  <ui-icon name="moon" w="18" style="margin-left:180px"></ui-icon><ui-label class="w" w="27" style="margin-left:11px">87°F</ui-label><ui-label class="w" w="52" style="margin-left:8px">Advisory</ui-label>
  <ui-icon name="up" w="12" h="8" style="margin-left:19px"></ui-icon><ui-icon name="drive" w="16" h="11" style="margin-left:10px"></ui-icon><ui-icon name="batt" w="17" h="12" style="margin-left:8px"></ui-icon><ui-icon name="wifi" w="13" style="margin-left:10px"></ui-icon><ui-icon name="vol" w="16" h="14" style="margin-left:8px"></ui-icon>
  <ui-label w="23" style="font-size:12px;margin-left:10px">ENG</ui-label>
  <div class="ck"><ui-label w="42">9:43 PM</ui-label><ui-label w="52">6/18/2021</ui-label></div>
  <ui-icon name="note" w="26" h="25" style="margin:7px 0 0 17px"></ui-icon><i class="e"></i>`}});

def('desktop-screen',class extends Base{render(){
  return `<style>:host{display:flex;flex-direction:column;width:1366px;height:768px;overflow:hidden}:host>*{flex:none}</style>
  <tab-strip></tab-strip><tool-bar></tool-bar><bookmark-bar></bookmark-bar><app-header></app-header><work-area></work-area><task-bar></task-bar>`}});
</script>
</body>
</html>
